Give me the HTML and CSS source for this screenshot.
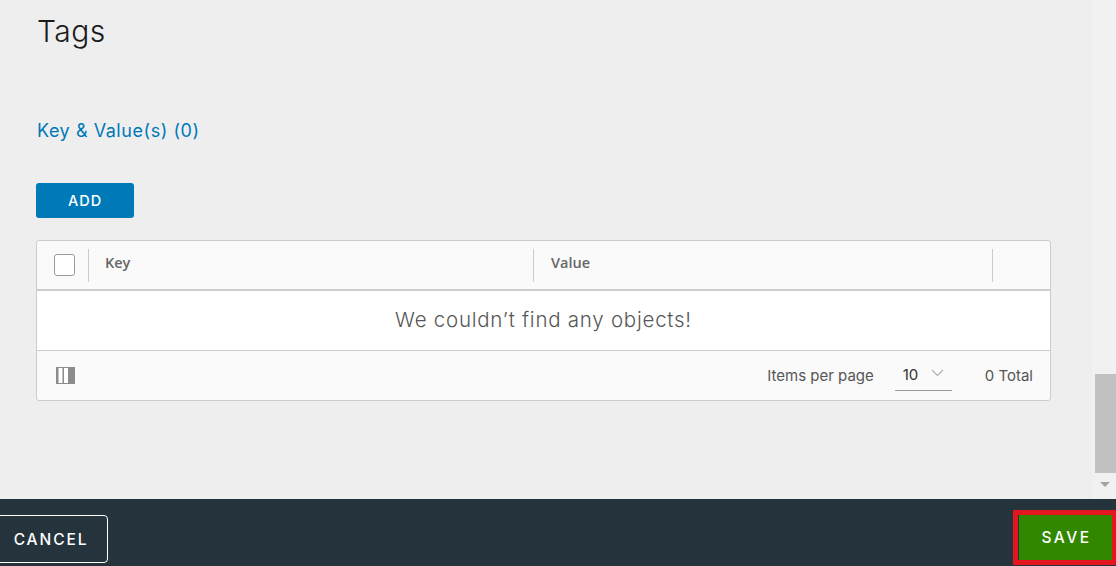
FILE: index.html
```html
<!DOCTYPE html>
<html>
<head>
<meta charset="utf-8">
<link rel="stylesheet" href="styles.css">
</head>
<body>
<div class="app">
  <div class="main">
    <div class="content">
      <h1 class="title">Tags</h1>
      <div class="section-label">Key &amp; Value(s) (0)</div>
      <button class="btn-add">ADD</button>
      <div class="grid">
        <div class="grid-head">
          <div class="cell-check"><span class="checkbox"></span></div>
          <div class="col col-key">Key</div>
          <div class="col col-value">Value</div>
          <div class="col col-last"></div>
        </div>
        <div class="grid-empty">We couldn’t find any objects!</div>
        <div class="grid-foot">
          <svg class="col-toggle" width="19" height="17" viewBox="0 0 19 17">
            <rect x="0.5" y="0.5" width="18" height="16" fill="#fff" stroke="#8c8c8c"/>
            <rect x="1" y="1" width="1.5" height="15" fill="#8c8c8c"/>
            <rect x="6.5" y="1" width="1.5" height="15" fill="#8c8c8c"/>
            <rect x="12" y="1" width="6" height="15" fill="#8c8c8c"/>
          </svg>
          <div class="pager">
            <span class="ipp">Items per page</span>
            <div class="select">
              <span>10</span>
              <svg width="13" height="8" viewBox="0 0 13 8"><path d="M1 1 L6.5 6.5 L12 1" fill="none" stroke="#b3b3b3" stroke-width="1.2"/></svg>
            </div>
            <span class="total">0 Total</span>
          </div>
        </div>
      </div>
    </div>
    <div class="scrollbar">
      <div class="thumb"></div>
      <div class="arrow"></div>
    </div>
  </div>
  <div class="footer">
    <button class="btn-cancel">CANCEL</button>
    <div class="save-frame"><button class="btn-save">SAVE</button></div>
  </div>
</div>
</body>
</html>
```

FILE: styles.css
```css
html, body {
  margin: 0;
  padding: 0;
}
body {
  width: 1116px;
  height: 566px;
  overflow: hidden;
  background: #eeeeee;
  font-family: Inter, Lato, sans-serif;
}
.app {
  display: flex;
  flex-direction: column;
  height: 566px;
}
.main {
  display: flex;
  height: 499px;
}
.content {
  flex: 1;
  padding-left: 36px;
  padding-right: 41px;
}
.title {
  margin: 12px 0 0 1px;
  font-size: 30px;
  font-weight: 300;
  color: #1b1b1b;
  line-height: 38px;
  letter-spacing: 0.4px;
}
.section-label {
  margin: 70px 0 0 1px;
  font-size: 18px;
  color: #0079b8;
  line-height: 22px;
  letter-spacing: 0.55px;
}
.btn-add {
  display: block;
  margin-top: 41px;
  width: 98px;
  height: 35px;
  border: none;
  border-radius: 3px;
  background: #0079b8;
  color: #fff;
  font-family: Inter, sans-serif;
  font-size: 14.5px;
  font-weight: 500;
  letter-spacing: 1px;
  padding: 0;
}
.grid {
  margin-top: 22px;
  border: 1px solid #cccccc;
  border-radius: 3px;
  background: #fafafa;
  width: 1013px;
}
.grid-head {
  display: flex;
  align-items: center;
  height: 48px;
  border-bottom: 2px solid #cccccc;
}
.cell-check {
  width: 52px;
  height: 33px;
  display: flex;
  align-items: center;
  padding-left: 17px;
  box-sizing: border-box;
  border-right: 1px solid #cccccc;
}
.checkbox {
  width: 19px;
  height: 20px;
  border: 1px solid #9a9a9a;
  border-radius: 3px;
  background: #fff;
}
.col {
  height: 33px;
  display: flex;
  align-items: center;
  box-sizing: border-box;
  font-family: "Open Sans", sans-serif;
  font-size: 14.5px;
  font-weight: 600;
  color: #666666;
  padding-left: 16px;
  padding-bottom: 6px;
  border-right: 1px solid #cccccc;
}
.col-key { width: 445px; }
.col-value { width: 459px; padding-left: 17px; }
.col-last { border-right: none; flex: 1; }
.grid-empty {
  height: 60px;
  background: #fff;
  display: flex;
  align-items: center;
  justify-content: center;
  font-size: 20.5px;
  font-weight: 300;
  color: #575757;
  border-bottom: 1px solid #cccccc;
  padding-bottom: 3px;
  box-sizing: border-box;
  letter-spacing: 0.75px;
}
.grid-foot {
  height: 49px;
  display: flex;
  align-items: center;
  justify-content: space-between;
  padding: 0 17px 0 19px;
}
.col-toggle { display: block; }
.pager {
  display: flex;
  align-items: center;
  font-size: 15px;
  color: #565656;
  margin-bottom: 1px;
}
.ipp { margin-right: 21px; }
.select {
  width: 57px;
  height: 32px;
  box-sizing: border-box;
  border-bottom: 1px solid #9a9a9a;
  display: flex;
  align-items: center;
  padding: 0 8px 0 8px;
  font-size: 15px;
  color: #333;
  margin-right: 33px;
}
.select span { flex: 1; }
.select svg { margin-bottom: 4px; }
.scrollbar {
  width: 24px;
  background: #f1f1f1;
  display: flex;
  flex-direction: column;
  align-items: center;
}
.thumb {
  margin-top: 374px;
  width: 21px;
  height: 99px;
  background: #c1c1c1;
  margin-left: 3px;
}
.arrow {
  margin-top: 9px;
  margin-left: 1px;
  width: 0;
  height: 0;
  border-left: 5px solid transparent;
  border-right: 5px solid transparent;
  border-top: 5px solid #a3a3a3;
}
.footer {
  height: 67px;
  background: #25333d;
  display: flex;
  justify-content: space-between;
  align-items: flex-start;
  padding-top: 16px;
  box-sizing: border-box;
}
.btn-cancel {
  margin-left: -8px;
  width: 116px;
  height: 48px;
  border: 1px solid #ffffff;
  border-radius: 4px;
  background: transparent;
  color: #fff;
  font-family: Inter, sans-serif;
  font-size: 15.5px;
  font-weight: 500;
  letter-spacing: 1.9px;
  padding: 0 0 0 2px;
}
.save-frame {
  margin-top: -5px;
  border: 5px solid #e3161f;
  border-right-width: 4px;
  padding-left: 1px;
  background: #25333d;
}
.btn-save {
  display: block;
  width: 93px;
  height: 45px;
  border: none;
  background: #318700;
  color: #fff;
  font-family: Inter, sans-serif;
  font-size: 15.5px;
  font-weight: 500;
  letter-spacing: 2.5px;
  padding: 0 0 0 2px;
}
```
